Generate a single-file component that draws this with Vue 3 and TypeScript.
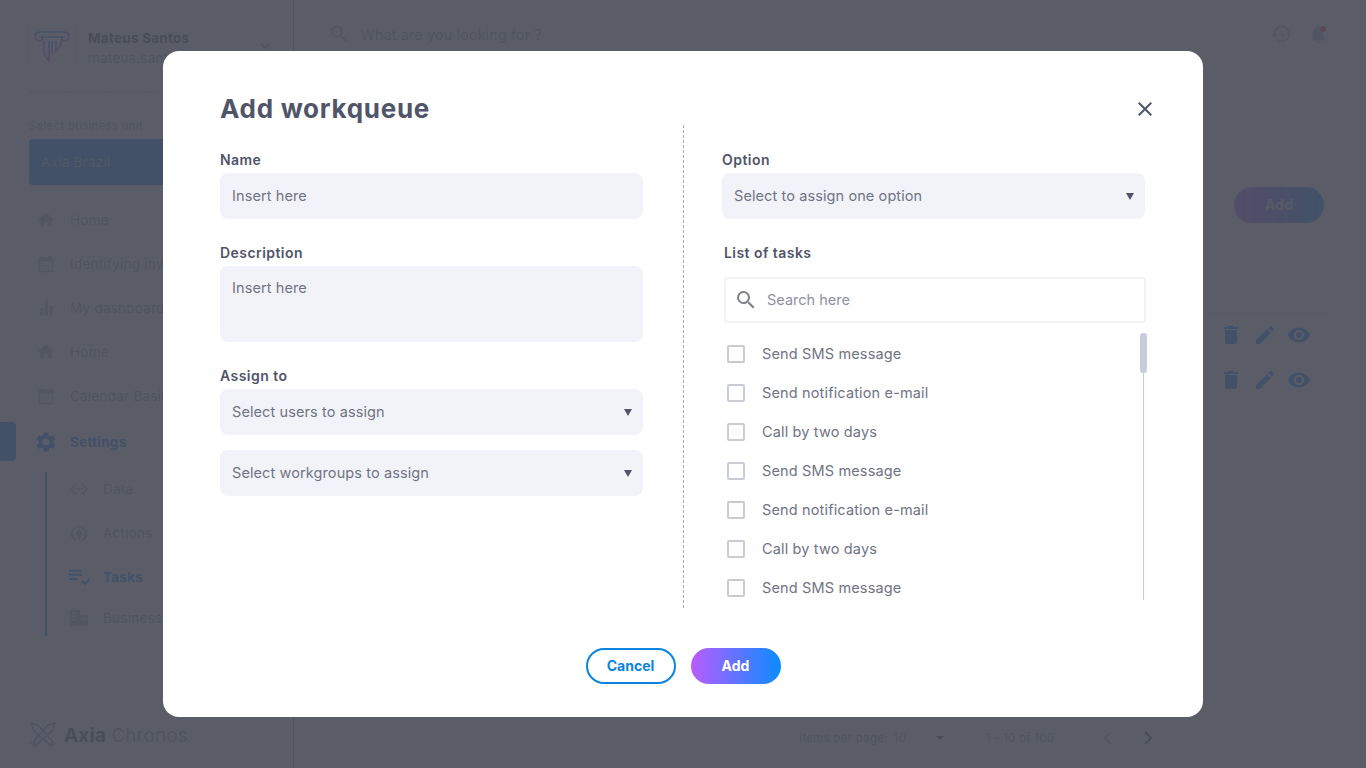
<script setup lang="ts">
const nav = [
  { label: 'Home', icon: 'home' },
  { label: 'Identifying invoices', icon: 'cal' },
  { label: 'My dashboard', icon: 'bars' },
  { label: 'Home', icon: 'home' },
  { label: 'Calendar Basic', icon: 'cal' },
]
const subs = [
  { label: 'Data', icon: 'code', active: false },
  { label: 'Actions', icon: 'target', active: false },
  { label: 'Tasks', icon: 'tasks', active: true },
  { label: 'Business hours', icon: 'grid', active: false },
]
const tasks = ['Send SMS message', 'Send notification e-mail', 'Call by two days', 'Send SMS message', 'Send notification e-mail', 'Call by two days', 'Send SMS message']
const paths: Record<string, string> = {
  home: 'M10 20v-6h4v6h5v-8h3L12 3 2 12h3v8z',
  cal: 'M19 4h-1V2h-2v2H8V2H6v2H5a2 2 0 0 0-2 2v14a2 2 0 0 0 2 2h14a2 2 0 0 0 2-2V6a2 2 0 0 0-2-2zm0 16H5V9h14v11zM8 13h2v2H8zm3 0h2v2h-2zm3 0h2v2h-2z',
  bars: 'M5 12h4v9H5zM10.5 3h4v18h-4zM16 9h4v12h-4z',
}
</script>

<template>
  <div class="page">
    <div class="under">
      <aside class="side">
        <div class="user">
          <div class="logo-box">
            <svg width="40" height="34" viewBox="0 0 40 34" fill="none" stroke-width="1.6">
              <defs>
                <linearGradient id="lg" x1="0" y1="0" x2="0.3" y2="1">
                  <stop offset="0" stop-color="#2a8cff" />
                  <stop offset="1" stop-color="#d24be0" />
                </linearGradient>
              </defs>
              <path stroke="url(#lg)" d="M8 12C2 12 1 3 8 3h24c7 0 6 9 0 9-3 0-3-4-1-4M8 12c3 0 3-4 1-4" />
              <path stroke="url(#lg)" d="M9 8h23M12 12v13l5 7V12M20 12v14M24 12v10l5-6v-4" />
            </svg>
          </div>
          <div class="user-text">
            <div class="user-name">Mateus Santos</div>
            <div class="user-mail">mateus.santos@axia.com</div>
          </div>
          <svg class="chev" width="10" height="6" viewBox="0 0 10 6" fill="none" stroke="#6a6d7a" stroke-width="1.2"><path d="M1 1l4 4 4-4" /></svg>
        </div>
        <div class="unit-label">Select business unit</div>
        <div class="unit">Axia Brazil</div>
        <nav class="nav">
          <div v-for="(n, i) in nav" :key="i" class="nav-item">
            <svg width="20" height="20" viewBox="0 0 24 24" fill="#b0b3bf"><path :d="paths[n.icon]" /></svg>
            <span>{{ n.label }}</span>
          </div>
        </nav>
        <div class="settings">
          <i class="tab"></i>
          <svg width="24" height="24" viewBox="0 0 24 24" fill="#0a84ff"><path d="M19.14 12.94c.04-.3.06-.61.06-.94 0-.32-.02-.64-.07-.94l2.03-1.58c.18-.14.23-.41.12-.61l-1.92-3.32c-.12-.22-.37-.29-.59-.22l-2.39.96c-.5-.38-1.03-.7-1.62-.94l-.36-2.54c-.04-.24-.24-.41-.48-.41h-3.84c-.24 0-.43.17-.47.41l-.36 2.54c-.59.24-1.13.57-1.62.94l-2.39-.96c-.22-.08-.47 0-.59.22L2.74 8.87c-.12.21-.08.47.12.61l2.03 1.58c-.05.3-.09.63-.09.94s.02.64.07.94l-2.03 1.58c-.18.14-.23.41-.12.61l1.92 3.32c.12.22.37.29.59.22l2.39-.96c.5.38 1.03.7 1.62.94l.36 2.54c.05.24.24.41.48.41h3.84c.24 0 .44-.17.47-.41l.36-2.54c.59-.24 1.13-.56 1.62-.94l2.39.96c.22.08.47 0 .59-.22l1.92-3.32c.12-.22.07-.47-.12-.61l-2.01-1.58zM12 15.6c-1.98 0-3.6-1.62-3.6-3.6s1.62-3.6 3.6-3.6 3.6 1.62 3.6 3.6-1.62 3.6-3.6 3.6z" /></svg>
          <span>Settings</span>
        </div>
        <div class="subs">
          <div v-for="s in subs" :key="s.label" class="sub" :class="{ on: s.active }">
            <svg width="22" height="22" viewBox="0 0 24 24" :fill="s.active ? '#0a84ff' : '#b0b3bf'">
              <path v-if="s.icon === 'code'" d="M8 6l-6 6 6 6 1.2-1.2L4.4 12l4.8-4.8zM16 6l6 6-6 6-1.200-1.200 4.800-4.800-4.800-4.800zM8 11h2v2H8zm3 0h2v2h-2zm3 0h2v2h-2z" />
              <path v-else-if="s.icon === 'target'" d="M12 2l3 3-3 3V6a7 7 0 0 0-3 13l-1 2A9 9 0 0 1 12 4zM16 5a9 9 0 0 1 0 16l-1-2a7 7 0 0 0 0-12zM12 9a3.500 3.500 0 0 1 3 5l-3 7-3-7a3.500 3.500 0 0 1 3-5z" />
              <path v-else-if="s.icon === 'tasks'" d="M1 4h14v2.200H1zM1 8.500h14v2.200H1zM1 13h9v2.200H1zM14 17l2-2 3 3 5-6 1.500 1.500L19 21z" />
              <path v-else d="M2 3h11v18H2zM13 9h9v12h-9zM4 5v2h2V5zm3 0v2h2V5zM4 9v2h2V9zm3 0v2h2V9zm-3 4v2h2v-2zm3 0v2h2v-2zm8-1v2h2v-2zm3 0v2h2v-2z" />
            </svg>
            <span>{{ s.label }}</span>
          </div>
        </div>
        <div class="brand">
          <svg width="28" height="26" viewBox="0 0 28 26" fill="none" stroke="#8a8cb0" stroke-width="1.4">
            <path d="M2 1l7 2 15 17-3 3L5 9zM26 1l-7 2L4 20l3 3L23 9zM1 21l6 4M27 21l-6 4" />
          </svg>
          <span><b>Axia</b> Chronos</span>
        </div>
      </aside>
      <main class="main">
        <header class="top">
          <svg width="22" height="22" viewBox="0 0 24 24" fill="#b0b3bf"><path d="M15.500 14h-.79l-.28-.27A6.470 6.470 0 0 0 16 9.500 6.500 6.500 0 1 0 9.500 16c1.610 0 3.090-.59 4.230-1.570l.27.28v.79l5 4.990L20.490 19l-4.990-5zm-6 0C7.010 14 5 11.990 5 9.500S7.010 5 9.500 5 14 7.010 14 9.500 11.990 14 9.500 14z" /></svg>
          <span class="ask">What are you looking for ?</span>
          <svg class="hist" width="22" height="22" viewBox="0 0 24 24" fill="#b0b3bf"><path d="M13 3c-4.970 0-9 4.030-9 9H1l3.890 3.890.07.140L9 12H6c0-3.870 3.130-7 7-7s7 3.130 7 7-3.130 7-7 7c-1.930 0-3.680-.79-4.940-2.060l-1.420 1.420C8.270 19.990 10.510 21 13 21c4.970 0 9-4.030 9-9s-4.030-9-9-9zm-1 5v5l4.280 2.540.72-1.210-3.500-2.080V8H12z" /></svg>
          <span class="bell">
            <svg width="22" height="22" viewBox="0 0 24 24" fill="#b0b3bf"><path d="M12 22c1.100 0 2-.9 2-2h-4c0 1.100.89 2 2 2zm6-6v-5c0-3.070-1.640-5.640-4.500-6.320V4c0-.83-.67-1.500-1.500-1.500s-1.500.67-1.500 1.500v.68C7.630 5.360 6 7.920 6 11v5l-2 2v1h16v-1l-2-2z" /></svg>
            <i class="dot"></i>
          </span>
        </header>
        <div class="add-row"><span class="bg-add">Add</span></div>
        <div class="t-line first"></div>
        <div class="t-head"></div>
        <div v-for="r in 2" :key="r" class="t-row">
          <svg width="24" height="24" viewBox="0 0 24 24" fill="#0a84ff"><path d="M6 19c0 1.100.9 2 2 2h8c1.100 0 2-.9 2-2V7H6v12zM19 4h-3.500l-1-1h-5l-1 1H5v2h14V4z" /></svg>
          <svg width="24" height="24" viewBox="0 0 24 24" fill="#0a84ff"><path d="M3 17.250V21h3.750L17.810 9.940l-3.750-3.750L3 17.250zM20.710 7.040c.39-.39.39-1.020 0-1.410l-2.340-2.340c-.39-.39-1.020-.39-1.410 0l-1.830 1.830 3.750 3.750 1.830-1.830z" /></svg>
          <svg width="24" height="24" viewBox="0 0 24 24" fill="#0a84ff"><path d="M12 4.500C7 4.500 2.730 7.610 1 12c1.730 4.390 6 7.500 11 7.500s9.270-3.110 11-7.500c-1.730-4.390-6-7.500-11-7.500zM12 17c-2.760 0-5-2.240-5-5s2.240-5 5-5 5 2.240 5 5-2.240 5-5 5zm0-8c-1.660 0-3 1.340-3 3s1.340 3 3 3 3-1.340 3-3-1.340-3-3-3z" /></svg>
        </div>
        <footer class="pager">
          <span class="ipp">Items per page:</span>
          <span class="ten">10</span>
          <i class="caret"></i>
          <span class="range">1 - 10 of 100</span>
          <svg class="prev" width="12" height="14" viewBox="0 0 12 14" fill="none" stroke="#b0b3bf" stroke-width="2"><path d="M9 1L3 7l6 6" /></svg>
          <svg class="next" width="12" height="14" viewBox="0 0 12 14" fill="none" stroke="#50556a" stroke-width="2"><path d="M3 1l6 6-6 6" /></svg>
        </footer>
      </main>
    </div>

    <div class="overlay">
      <section class="modal">
        <header class="m-head">
          <h1>Add workqueue</h1>
          <svg width="24" height="24" viewBox="0 0 24 24" fill="#50556a"><path d="M19 6.410L17.590 5 12 10.590 6.410 5 5 6.410 10.590 12 5 17.590 6.410 19 12 13.410 17.590 19 19 17.590 13.410 12z" /></svg>
        </header>
        <div class="m-body">
          <div class="col left">
            <div class="field">
              <label>Name</label>
              <div class="box">Insert here</div>
            </div>
            <div class="field">
              <label>Description</label>
              <div class="box area">Insert here</div>
            </div>
            <div class="field">
              <label>Assign to</label>
              <div class="box sel">Select users to assign<i class="arrow"></i></div>
              <div class="box sel second">Select workgroups to assign<i class="arrow"></i></div>
            </div>
          </div>
          <div class="divider"></div>
          <div class="col">
            <div class="field">
              <label>Option</label>
              <div class="box sel">Select to assign one option<i class="arrow"></i></div>
            </div>
            <div class="field">
              <label class="indent">List of tasks</label>
              <div class="search">
                <svg width="24" height="24" viewBox="0 0 24 24" fill="#7f8088"><path d="M15.500 14h-.79l-.28-.27A6.470 6.470 0 0 0 16 9.500 6.500 6.500 0 1 0 9.500 16c1.610 0 3.090-.59 4.230-1.570l.27.28v.79l5 4.990L20.490 19l-4.990-5zm-6 0C7.010 14 5 11.990 5 9.500S7.010 5 9.500 5 14 7.010 14 9.500 11.990 14 9.500 14z" /></svg>
                <span>Search here</span>
              </div>
              <div class="list">
                <div v-for="(t, i) in tasks" :key="i" class="task"><i class="check"></i>{{ t }}</div>
                <div class="track"></div>
                <div class="thumb"></div>
              </div>
            </div>
          </div>
        </div>
        <footer class="m-foot">
          <button class="btn ghost">Cancel</button>
          <button class="btn solid">Add</button>
        </footer>
      </section>
    </div>
  </div>
</template>

<style>
html, body { margin: 0; overflow: hidden; }
</style>

<style scoped>
* { box-sizing: border-box; }
.page { position: relative; width: 1366px; height: 768px; overflow: hidden; font-family: Inter, "Open Sans", sans-serif; color: #50556a; background: #fff; }
.under { display: flex; height: 768px; color: #9a9dab; font-size: 13.5px; letter-spacing: .25px; }
.side { width: 294px; flex: none; border-right: 1px solid #a5a8b5; padding: 22px 0 0 29px; display: flex; flex-direction: column; position: relative; }
.user { display: flex; align-items: center; padding-bottom: 22px; border-bottom: 1px dashed #c5c7d0; height: 71px; position: relative; }
.logo-box { width: 48px; height: 48px; margin-right: 12px; display: flex; align-items: center; justify-content: center; border: 1px solid #e6e7ec; border-radius: 4px; margin-left: -1px; flex: none; }
.user-text { padding-top: 4px; }
.user-name { font-weight: 700; color: #50556a; font-size: 13.5px; line-height: 20px; }
.user-mail { line-height: 20px; white-space: nowrap; }
.chev { position: absolute; left: 231px; top: 21px; }
.unit-label { margin-top: 24px; font-size: 11.5px; line-height: 18px; }
.unit { margin-top: 4px; height: 46px; margin-right: 60px; border-radius: 4px; background: #0a84ff; color: #a9bcd6; padding-left: 12px; line-height: 46px; }
.nav { margin-top: 13px; margin-left: 7px; }
.nav-item { height: 44px; display: flex; align-items: center; gap: 14px; }
.nav-item svg { width: 20px; flex: none; }
.settings { display: flex; align-items: center; height: 44px; margin-left: 5px; gap: 12px; color: #0a84ff; font-weight: 700; position: relative; margin-top: 2px; }
.tab { position: absolute; left: -34px; top: 2px; width: 16px; height: 39px; background: #0a84ff; border-radius: 0 4px 4px 0; }
.subs { margin: 8px 0 0 16px; border-left: 2px solid #0a84ff; height: 164px; padding-left: 21px; }
.sub { display: flex; align-items: center; gap: 13px; height: 44px; }
.sub:first-child { margin-top: -5px; }
.sub:last-child { height: 38px; }
.sub.on { color: #0a84ff; font-weight: 700; }
.brand { position: absolute; left: 29px; top: 722px; display: flex; align-items: center; gap: 7px; font-size: 19px; letter-spacing: .1px; white-space: nowrap; }
.brand b { color: #50556a; }
.main { flex: 1; min-width: 0; padding: 0 38px 0 34px; display: flex; flex-direction: column; }
.top { height: 68px; display: flex; align-items: center; gap: 11px; }
.ask { font-size: 14px; letter-spacing: .3px; }
.hist { margin-left: auto; margin-right: 0; }
.bell { position: relative; width: 22px; height: 22px; margin-left: 4px; margin-right: -1px; }
.dot { position: absolute; right: 3px; top: 3px; width: 6px; height: 6px; border-radius: 50%; background: #f0324a; }
.add-row { display: flex; justify-content: flex-end; padding-top: 119px; margin-right: 4px; }
.bg-add { width: 90px; height: 36px; border-radius: 18px; background: linear-gradient(90deg, #b95cff, #0a8cff); color: #d9dbe4; font-weight: 700; font-size: 14px; padding-bottom: 1px; display: flex; align-items: center; justify-content: center; }
.t-line.first { margin-top: 42px; height: 1px; background: #e2e3e8; }
.t-head { height: 46.5px; border-bottom: 1px solid #e6e7ec; }
.t-row { height: 45px; display: flex; align-items: center; justify-content: flex-end; gap: 10px; padding-right: 17px; border-bottom: 1px solid #e6e7ec; }
.t-row svg { width: 24px; }
.pager { margin-top: auto; margin-bottom: 20px; height: 20px; display: flex; align-items: center; font-size: 11.5px; padding-left: 471px; position: relative; }
.ten { margin-left: 6px; width: 42px; }
.caret { width: 0; height: 0; border: 4px solid transparent; border-top-color: #555; border-bottom: none; margin-left: 0; }
.range { margin-left: 42px; }
.prev { position: absolute; left: 774px; }
.next { position: absolute; left: 814px; }

.overlay { position: absolute; inset: 0; background: rgba(72, 75, 88, .9); backdrop-filter: blur(.5px); display: flex; justify-content: center; padding-top: 51px; }
.modal { width: 1040px; height: 666px; background: #fff; border-radius: 16px; padding: 0 58px 0 57px; display: flex; flex-direction: column; }
.m-head { display: flex; justify-content: space-between; align-items: center; height: 74px; padding-top: 42px; }
.m-head h1 { margin: 0; font-size: 26px; line-height: 36px; font-weight: 700; color: #50556a; letter-spacing: .72px; }
.m-head svg { margin-right: -12px; }
.m-body { display: flex; height: 483px; }
.col { width: 423px; flex: none; padding-top: 25px; }
.col.left { margin-right: 40px; }
.divider { width: 0; border-left: 1px dashed #a9acb8; margin-right: 38px; }
.field { margin-bottom: 24px; }
label { display: block; font-size: 14px; line-height: 20px; margin-bottom: 3px; font-weight: 600; letter-spacing: .45px; color: #50556a; }
label.indent { margin-left: 2px; margin-bottom: 14px; }
.box { height: 46px; background: #f2f3f8; border-radius: 8px; padding-left: 12px; font-size: 14.5px; letter-spacing: .1px; line-height: 46px; color: #6f7385; position: relative; }
.area { height: 76px; line-height: 44px; }
.second { margin-top: 15px; }
.arrow { position: absolute; right: 11px; top: 20px; width: 0; height: 0; border-left: 4px solid transparent; border-right: 4px solid transparent; border-top: 7px solid #50556a; }
.search { margin-left: 2px; width: 422px; height: 46px; border: 2px solid #f1f2f6; border-radius: 4px; display: flex; align-items: center; padding: 0 0 1px 8px; gap: 9px; font-size: 14.5px; color: #8e91a2; }
.search svg { margin-top: 1px; }
.list { position: relative; margin-top: 10px; margin-right: -3px; height: 267px; overflow: hidden; padding-top: 1px; }
.task { height: 39px; display: flex; align-items: center; padding-left: 5px; font-size: 14.5px; letter-spacing: .15px; color: #6f7385; }
.check { width: 18px; height: 18px; border: 2px solid #c9cbd6; border-radius: 2px; margin-right: 17px; flex: none; }
.track { position: absolute; left: 421px; top: 0; width: 1px; height: 267px; background: #c9cbdc; }
.thumb { position: absolute; left: 418px; top: 0; width: 7px; height: 40px; border-radius: 3px; background: #c9cbdf; }
.m-foot { display: flex; justify-content: center; gap: 15px; padding: 40px 0 0 1px; }
.btn { width: 90px; height: 36px; border-radius: 18px; font: 700 14px Inter, sans-serif; padding: 0 0 1px; cursor: pointer; }
.ghost { background: #fff; border: 2px solid #0a84e0; color: #0a84e0; }
.solid { border: 0; background: linear-gradient(90deg, #b95cff, #0a8cff); color: #fff; }
</style>
